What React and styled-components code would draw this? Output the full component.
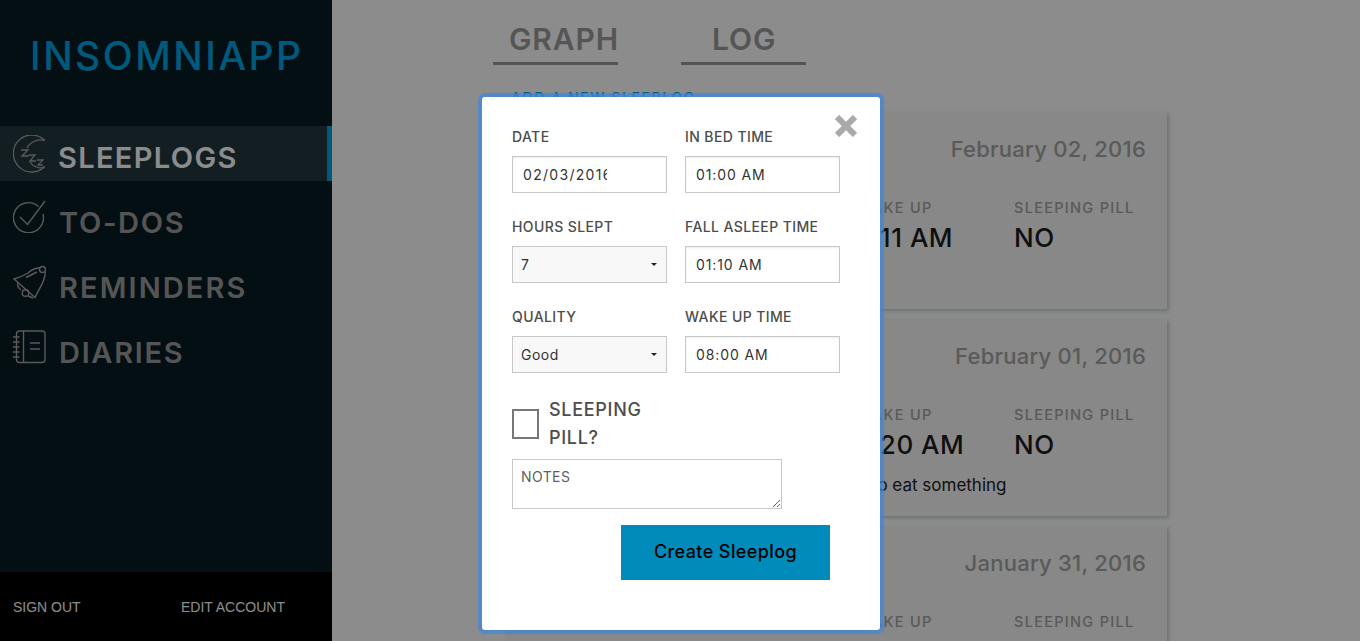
import styled, { createGlobalStyle } from "styled-components";

const GlobalStyle = createGlobalStyle`
  html, body { margin: 0; padding: 0; background: #fff; }
  body { font-family: Inter, "Noto Sans", sans-serif; }
  * { box-sizing: border-box; }
`;

const Page = styled.div`
  position: relative;
  display: flex;
  width: 100%;
  height: 641px;
  overflow: hidden;
  background: #fff;
`;

const Sidebar = styled.aside`
  display: flex;
  flex-direction: column;
  flex: 0 0 332px;
  background: #071d24;
`;

const Logo = styled.h1`
  margin: 0;
  height: 126px;
  padding: 32px 0 0 30px;
  font-size: 39px;
  line-height: 48px;
  font-weight: 500;
  letter-spacing: 2.5px;
  color: #00a4e3;
`;

const Nav = styled.nav`
  display: flex;
  flex-direction: column;
  gap: 10px;
`;

const NavItem = styled.a`
  display: flex;
  align-items: flex-start;
  height: 55px;
  padding: 9px 0 0 13px;
  font-size: 29px;
  line-height: 46px;
  font-weight: 600;
  letter-spacing: ${(props) => props.$spacing};
  color: ${(props) => (props.$active ? "#fff" : "#9c9c9c")};
  background: ${(props) => (props.$active ? "#243741" : "transparent")};
  border-right: 5px solid ${(props) => (props.$active ? "#00a4e3" : "transparent")};
  svg {
    flex: 0 0 33px;
    margin-right: ${(props) => (props.$active ? "12px" : "13px")};
    color: #a4a4a4;
  }
`;

const SideFooter = styled.div`
  display: flex;
  justify-content: space-between;
  margin-top: auto;
  height: 69px;
  padding: 0 47px 0 13px;
  align-items: center;
  background: #000;
  font-family: "Liberation Sans", Arial, sans-serif;
  font-size: 14px;
  color: #fff;
`;

const Main = styled.main`
  flex: 1;
  padding-left: 161px;
`;

const Tabs = styled.div`
  display: flex;
  gap: 63px;
  padding-top: 20px;
`;

const Tab = styled.div`
  width: 125px;
  height: 45px;
  padding-left: ${(props) => props.$pad};
  font-size: 30px;
  line-height: 38px;
  font-weight: 600;
  letter-spacing: 0.9px;
  color: #9c9c9c;
  border-bottom: 3px solid #9c9c9c;
`;

const AddLink = styled.div`
  margin: 25px 0 0 18px;
  height: 22px;
  font-size: 14px;
  line-height: 16px;
  font-weight: 500;
  letter-spacing: 1.6px;
  color: #00a4e3;
`;

const Card = styled.article`
  width: 660px;
  height: 197px;
  margin: 0 0 10px 14px;
  padding: 24px 21px 0 20px;
  background: #f7f7f7;
  box-shadow: 2px 2px 4px rgba(60, 90, 120, 0.3);
`;

const CardDate = styled.div`
  font-size: 22px;
  line-height: 26px;
  font-weight: 500;
  letter-spacing: 0.25px;
  text-align: right;
  color: #a4a4a4;
`;

const Stats = styled.div`
  display: grid;
  grid-template-columns: 170px 160px 157px 1fr;
  margin-top: 36px;
`;

const StatLabel = styled.div`
  font-size: 14.5px;
  line-height: 20px;
  font-weight: 500;
  letter-spacing: 1.3px;
  white-space: nowrap;
  color: #a4a4a4;
`;

const StatValue = styled.div`
  margin-top: 5px;
  font-size: 26px;
  line-height: 30px;
  font-weight: 500;
  letter-spacing: 0.5px;
  white-space: nowrap;
  color: #1c1c1c;
`;

const CardNote = styled.div`
  margin: 15px 0 0 345px;
  font-size: 17px;
  line-height: 20px;
  white-space: nowrap;
  color: #1c1c1c;
`;

const Overlay = styled.div`
  position: absolute;
  inset: 0;
  padding: 97px 0 0 482px;
  background: rgba(0, 0, 0, 0.45);
`;

const Modal = styled.form`
  position: relative;
  width: 398px;
  height: 533px;
  padding: 30px 0 0 30px;
  background: #fff;
  border-radius: 3px;
  box-shadow: 0 0 1px 4px rgba(60, 135, 225, 0.7);
`;

const CloseButton = styled.button`
  position: absolute;
  top: 18px;
  right: 23px;
  display: flex;
  padding: 0;
  border: 0;
  background: none;
  color: #aaa;
`;

const FieldGrid = styled.div`
  display: grid;
  grid-template-columns: 155px 155px;
  column-gap: 18px;
  row-gap: 24px;
`;

const Field = styled.label`
  display: flex;
  flex-direction: column;
`;

const FieldLabel = styled.span`
  height: 29px;
  font-size: 14px;
  line-height: 20px;
  font-weight: 500;
  letter-spacing: 0.4px;
  color: #4d4d4d;
`;

const Input = styled.input`
  width: 155px;
  height: 37px;
  padding: 0 ${(props) => props.$padRight || "10px"} 0 10px;
  border: 1px solid #c8c8c8;
  box-shadow: inset 0 1px 2px rgba(0, 0, 0, 0.08);
  outline: none;
  font-family: Inter, sans-serif;
  font-size: 14px;
  letter-spacing: ${(props) => props.$spacing || "0.9px"};
  color: #333;
`;

const SelectWrap = styled.div`
  position: relative;
  &::after {
    content: "";
    position: absolute;
    top: 17px;
    right: 10px;
    border-style: solid;
    border-width: 3px 3px 0;
    border-color: #222 transparent transparent;
  }
`;

const Select = styled.select`
  appearance: none;
  display: block;
  width: 155px;
  height: 37px;
  padding: 0 8px;
  border: 1px solid #c8c8c8;
  border-radius: 0;
  outline: none;
  background: #f8f8f8;
  font-family: Inter, sans-serif;
  font-size: 14px;
  letter-spacing: 0.5px;
  color: #333;
`;

const PillRow = styled.label`
  display: flex;
  align-items: flex-start;
  margin-top: 22px;
`;

const Checkbox = styled.input`
  appearance: none;
  width: 27px;
  height: 30px;
  margin: 14px 10px 0 0;
  border: 2px solid #777;
  background: #fff;
`;

const PillText = styled.span`
  width: 110px;
  padding-top: 1px;
  font-size: 18px;
  line-height: 28px;
  font-weight: 500;
  letter-spacing: 0.7px;
  color: #4d4d4d;
`;

const Notes = styled.textarea`
  display: block;
  width: 270px;
  height: 50px;
  margin-top: 7px;
  padding: 8px;
  border: 1px solid #c8c8c8;
  outline: none;
  font-family: Inter, sans-serif;
  font-size: 14px;
  line-height: 18px;
  letter-spacing: 0.4px;
  &::placeholder { color: #5f5f5f; opacity: 1; }
`;

const SubmitButton = styled.button`
  display: block;
  width: 209px;
  height: 55px;
  margin: 16px 0 0 109px;
  padding: 0 0 2px;
  border: 0;
  background: #008bbb;
  font-family: Inter, sans-serif;
  font-size: 18px;
  font-weight: 500;
  letter-spacing: 0.4px;
  color: #000;
`;

const MoonIcon = () => (
  <svg width="33" height="38" viewBox="0 0 33 38" fill="none" stroke="currentColor" strokeWidth="1.3">
    <path d="M32 5.5A18.5 18.5 0 1 0 32 31.5" />
    <path d="M32 5.5C25 3.5 17 7 14 13M32 31.5C27 34.5 20 32 17 27" />
    <path d="M8 15H15L9 21H16M16 20H22L17 26H23M24 25H30L25 30H30" />
  </svg>
);

const CheckIcon = () => (
  <svg width="33" height="33" viewBox="0 0 33 33" fill="none" stroke="currentColor" strokeWidth="1.4">
    <path d="M25.5 6.5A15 15 0 1 0 30 14" />
    <path d="M7 17L14.5 24.5L32 1" />
  </svg>
);

const BellIcon = () => (
  <svg width="33" height="34" viewBox="0 0 33 34" fill="none" stroke="currentColor" strokeWidth="1.4">
    <circle cx="29.5" cy="4.5" r="3" />
    <path d="M27 3C22 3 18 5 15 8C10 11 5 13 1 14L22 32.5C24 27 29 21 31 14C32 11 32.5 9 32 7" />
    <path d="M5 18C4 21 5 23 8 25" />
    <circle cx="12.5" cy="28" r="3.3" />
    <path d="M13 12.5L24 7M15 31L20 33" />
  </svg>
);

const NotebookIcon = () => (
  <svg width="33" height="34" viewBox="0 0 33 34" fill="none" stroke="currentColor" strokeWidth="1.4">
    <rect x="3.5" y="1" width="28.5" height="31.5" rx="3" />
    <path d="M10.5 1V32.5M17 13H27M17 19H27" />
    <path d="M0 7H6.5M0 12H6.5M0 17H6.5M0 22H6.5M0 27H6.5" />
  </svg>
);

const logs = [
  { date: "February 02, 2016", wake: "7:11 AM" },
  { date: "February 01, 2016", wake: "7:20 AM", note: "to eat something" },
  { date: "January 31, 2016", wake: "7:05 AM" },
];

const App = () => {
  return (
    <Page>
      <GlobalStyle />
      <Sidebar>
        <Logo>INSOMNIAPP</Logo>
        <Nav>
          <NavItem $active $spacing="1.35px"><MoonIcon />SLEEPLOGS</NavItem>
          <NavItem $spacing="1.7px"><CheckIcon />TO-DOS</NavItem>
          <NavItem $spacing="2.1px"><BellIcon />REMINDERS</NavItem>
          <NavItem $spacing="1.7px"><NotebookIcon />DIARIES</NavItem>
        </Nav>
        <SideFooter>
          <span>SIGN OUT</span>
          <span>EDIT ACCOUNT</span>
        </SideFooter>
      </Sidebar>
      <Main>
        <Tabs>
          <Tab $pad="16px">GRAPH</Tab>
          <Tab $pad="31px">LOG</Tab>
        </Tabs>
        <AddLink>ADD A NEW SLEEPLOG</AddLink>
        {logs.map((log) => (
          <Card key={log.date}>
            <CardDate>{log.date}</CardDate>
            <Stats>
              <div><StatLabel>IN BED</StatLabel><StatValue>1:00 AM</StatValue></div>
              <div><StatLabel>ASLEEP</StatLabel><StatValue>1:10 AM</StatValue></div>
              <div><StatLabel>WAKE UP</StatLabel><StatValue>{log.wake}</StatValue></div>
              <div><StatLabel>SLEEPING PILL</StatLabel><StatValue>NO</StatValue></div>
            </Stats>
            {log.note && <CardNote>{log.note}</CardNote>}
          </Card>
        ))}
      </Main>
      <Overlay>
        <Modal>
          <CloseButton type="button" aria-label="Close">
            <svg width="22" height="22" viewBox="0 0 22 22" stroke="currentColor" strokeWidth="6">
              <path d="M2 2L20 20M20 2L2 20" />
            </svg>
          </CloseButton>
          <FieldGrid>
            <Field>
              <FieldLabel>DATE</FieldLabel>
              <Input $padRight="59px" $spacing="1.3px" defaultValue="02/03/2016" />
            </Field>
            <Field>
              <FieldLabel>IN BED TIME</FieldLabel>
              <Input defaultValue="01:00 AM" />
            </Field>
            <Field>
              <FieldLabel>HOURS SLEPT</FieldLabel>
              <SelectWrap>
                <Select defaultValue="7">
                  <option>6</option>
                  <option>7</option>
                  <option>8</option>
                </Select>
              </SelectWrap>
            </Field>
            <Field>
              <FieldLabel>FALL ASLEEP TIME</FieldLabel>
              <Input defaultValue="01:10 AM" />
            </Field>
            <Field>
              <FieldLabel>QUALITY</FieldLabel>
              <SelectWrap>
                <Select defaultValue="Good">
                  <option>Bad</option>
                  <option>Good</option>
                </Select>
              </SelectWrap>
            </Field>
            <Field>
              <FieldLabel>WAKE UP TIME</FieldLabel>
              <Input defaultValue="08:00 AM" />
            </Field>
          </FieldGrid>
          <PillRow>
            <Checkbox type="checkbox" />
            <PillText>SLEEPING PILL?</PillText>
          </PillRow>
          <Notes placeholder="NOTES" />
          <SubmitButton type="button">Create Sleeplog</SubmitButton>
        </Modal>
      </Overlay>
    </Page>
  );
};

export default App;
